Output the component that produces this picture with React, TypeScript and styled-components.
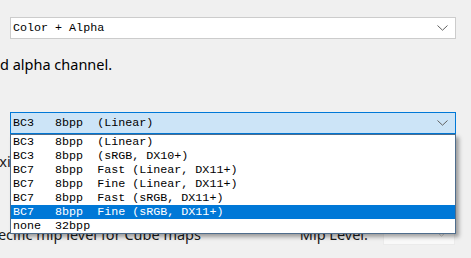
import React from 'react'
import styled, { createGlobalStyle } from 'styled-components'

const formats = [
  'BC3   8bpp  (Linear)',
  'BC3   8bpp  (sRGB, DX10+)',
  'BC7   8bpp  Fast (Linear, DX11+)',
  'BC7   8bpp  Fine (Linear, DX11+)',
  'BC7   8bpp  Fast (sRGB, DX11+)',
  'BC7   8bpp  Fine (sRGB, DX11+)',
  'none  32bpp',
]

const selectedIndex = 5

const Chevron = ({ color = '#606060' }: { color?: string }) => (
  <svg width="11" height="6" viewBox="0 0 11 6">
    <polyline points="0.5,0.5 5.5,5.2 10.5,0.5" fill="none" stroke={color} strokeWidth="1" />
  </svg>
)

const App = () => {
  return (
    <>
      <GlobalStyle />
      <Page>
        <Field>
          <Combo>
            <span>Color + Alpha</span>
            <Chevron />
          </Combo>
        </Field>
        <Description>d alpha channel.</Description>
        <Field $gap={38}>
          <Combo $focused>
            <span>{formats[0]}</span>
            <Chevron />
          </Combo>
          <DropList>
            {formats.map((f, i) => (
              <Option key={f} $selected={i === selectedIndex}>
                {f}
              </Option>
            ))}
          </DropList>
        </Field>
        <Row $gap={16}>
          <Label $shift={22}>Maximum size</Label>
        </Row>
        <Row $gap={51}>
          <Label $shift={19}>Specific mip level for Cube maps</Label>
          <MipGroup>
            <Label>Mip Level:</Label>
            <SmallCombo>
              <Chevron color="#c8c8c8" />
            </SmallCombo>
          </MipGroup>
        </Row>
      </Page>
    </>
  )
}

export default App

// Styles
const GlobalStyle = createGlobalStyle`
  html, body {
    margin: 0;
    padding: 0;
    background: #f0f0f0;
  }
`

const Page = styled.div`
  position: relative;
  width: 471px;
  height: 258px;
  overflow: hidden;
  box-sizing: border-box;
  padding-top: 17px;
  background: #f0f0f0;
  font-family: 'Noto Sans', 'Open Sans', sans-serif;
  font-size: 14.5px;
  color: #000;
`

const Field = styled.div<{ $gap?: number }>`
  position: relative;
  margin: ${(p) => p.$gap ?? 0}px 0 0 10px;
  width: 446px;
`

const Combo = styled.div<{ $focused?: boolean }>`
  height: 22px;
  box-sizing: border-box;
  display: flex;
  align-items: center;
  justify-content: space-between;
  padding: 0 7px 0 2px;
  border: 1px solid ${(p) => (p.$focused ? '#0078d7' : '#cccccc')};
  background: ${(p) => (p.$focused ? '#cce4f7' : '#ffffff')};
  font-family: 'Liberation Mono', 'DejaVu Sans Mono', monospace;
  font-size: 11.7px;
  white-space: pre;
`

const Description = styled.p`
  margin: 15px 0 0 0;
  line-height: 20px;
`

const DropList = styled.div`
  position: absolute;
  top: 100%;
  left: 0;
  z-index: 10;
  width: 446px;
  box-sizing: border-box;
  border: 1px solid #4f6d8c;
  background: #ffffff;
  box-shadow: 3px 3px 4px rgba(0, 0, 0, 0.35);
`

const Option = styled.div<{ $selected?: boolean }>`
  height: 14px;
  line-height: 14px;
  padding-left: 2px;
  font-family: 'Liberation Mono', 'DejaVu Sans Mono', monospace;
  font-size: 11.7px;
  white-space: pre;
  background: ${(p) => (p.$selected ? '#0078d7' : 'transparent')};
  color: ${(p) => (p.$selected ? '#ffffff' : '#000000')};
`

const Row = styled.div<{ $gap: number }>`
  display: flex;
  align-items: center;
  justify-content: space-between;
  height: 22px;
  margin-top: ${(p) => p.$gap}px;
  padding-right: 16px;
`

const Label = styled.span<{ $shift?: number }>`
  margin-left: ${(p) => -(p.$shift ?? 0)}px;
  line-height: 20px;
  white-space: nowrap;
  color: #1a1a1a;
`

const MipGroup = styled.div`
  display: flex;
  align-items: center;
  gap: 15px;
`

const SmallCombo = styled.div`
  width: 72px;
  height: 22px;
  box-sizing: border-box;
  display: flex;
  align-items: center;
  justify-content: flex-end;
  padding-right: 7px;
  border: 1px solid #ebebeb;
  background: #f9f9f9;
`
